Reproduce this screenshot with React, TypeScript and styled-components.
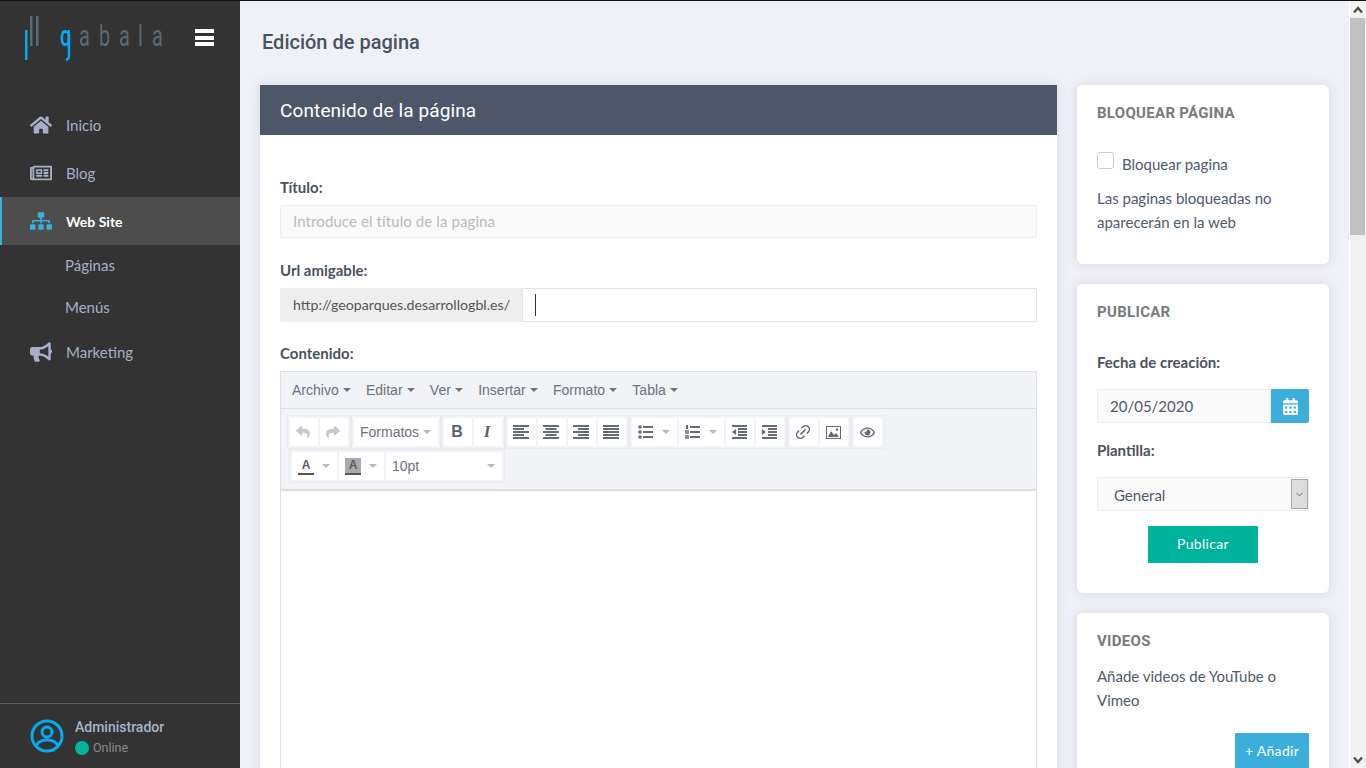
import React from "react";
import styled, { createGlobalStyle } from "styled-components";
import { FaHome, FaRegNewspaper, FaSitemap, FaBullhorn, FaCalendarAlt, FaReply, FaShare, FaRegEye } from "react-icons/fa";
import { Link2, ChevronDown } from "lucide-react";

const Global = createGlobalStyle`
  body { margin: 0; background: #f0f1f7; border-top: 1px solid #111; font-family: Lato, "Noto Sans", sans-serif; font-size: 15px; color: #4f5a6b; }
  * { box-sizing: border-box; }
`;

const Shell = styled.div`display: flex; align-items: flex-start;`;

const Rail = styled.div`
  position: fixed; right: 0; top: 1px; bottom: 0; width: 17px; background: #f1f1f1; border-left: 1px solid #fff;
  display: flex; flex-direction: column;
`;
const RailArrow = styled.svg`display: block; flex: none; width: 16px; height: 17px;`;
const RailThumb = styled.div`width: 15px; height: 217px; background: #c1c1c1;`;
const RailGap = styled.div`flex: 1;`;

const Sidebar = styled.aside`
  position: sticky; top: 0; width: 240px; flex: none; height: 767px; background: #333;
  display: flex; flex-direction: column;
`;
const Brand = styled.div`height: 100px; position: relative;`;
const LogoSvg = styled.svg`position: absolute; left: 0; top: 0;`;
const Burger = styled.div`
  position: absolute; left: 195px; top: 28px; width: 19px; display: flex; flex-direction: column; gap: 2.5px;
  span { display: block; height: 4px; background: #fff; }
`;
const Nav = styled.nav`display: flex; flex-direction: column; flex: 1;`;
const NavItem = styled.a<{ $active?: boolean; $lift?: boolean }>`
  height: 48px; display: flex; align-items: center; padding: 0 0 ${p => (p.$lift ? "2px" : "0")} 30px; gap: 14px;
  font-size: ${p => (p.$active ? "14px" : "15px")}; color: ${p => (p.$active ? "#fff" : "#a5b0c8")};
  font-weight: ${p => (p.$active ? 700 : 400)};
  background: ${p => (p.$active ? "#4d4d4d" : "transparent")};
  box-shadow: ${p => (p.$active ? "inset 2px 0 0 #3baedc" : "none")};
  svg { width: 22px; height: 20px; color: ${p => (p.$active ? "#3baedc" : "#a5b0c8")}; flex: none; }
`;
const SubItem = styled.a`height: 42px; display: flex; align-items: center; padding: 0 0 2px 65px; color: #a5b0c8; font-size: 15px;`;
const UserBar = styled.div`
  height: 65px; border-top: 1px solid #5a5a5a; display: flex; align-items: center; padding: 0 0 0 30px; gap: 11px;
`;
const UserText = styled.div`display: flex; flex-direction: column; gap: 4px; padding-top: 2px;`;
const UserName = styled.div`font: 500 14px/18px Roboto, sans-serif; color: #a9b4cc;`;
const UserState = styled.div`display: flex; align-items: center; gap: 4px; font: 400 12.5px/16px Roboto, sans-serif; color: #8a8a8a;`;
const Dot = styled.i`width: 14px; height: 14px; border-radius: 50%; background: #00b49c; display: block;`;

const Main = styled.main`flex: 1; min-width: 0; padding: 0 20px 20px;`;
const PageTitle = styled.h1`margin: 0; padding: 0 0 3px 2px; height: 84px; display: flex; align-items: center; font: 500 20px Roboto, sans-serif; color: #4a5260;`;
const Columns = styled.div`display: grid; grid-template-columns: 797px 252px; gap: 20px; align-items: start;`;
const Panel = styled.section`background: #fff; box-shadow: 0 0 12px rgba(60, 65, 90, .13);`;
const PanelHead = styled.header`height: 50px; background: #4d5769; color: #fff; display: flex; align-items: center; padding-left: 20px; font: 400 19px Roboto, sans-serif; letter-spacing: .12px;`;
const PanelBody = styled.div`padding: 44px 20px 20px;`;
const Label = styled.label<{ $top?: number }>`display: block; height: 18px; margin-top: ${p => p.$top ?? 0}px; font-weight: 700; font-size: 15px; line-height: 16px; color: #4a5260;`;
const TitleInput = styled.div`
  height: 33px; margin: 8px 0 24px; background: #fafafa; border: 1px solid #eee; border-radius: 2px;
  display: flex; align-items: center; padding: 0 0 2px 12px; color: #bbb; font-size: 15px; letter-spacing: .1px;
`;
const UrlGroup = styled.div`display: flex; height: 34px; margin: 8px 0 23px;`;
const UrlAddon = styled.div`width: 242px; background: #eee; display: flex; align-items: center; padding: 0 0 2px 13px; font-size: 14.2px; color: #555; border-radius: 2px 0 0 2px;`;
const UrlField = styled.div`flex: 1; background: #fff; border: 1px solid #e4e4e4; border-radius: 0 2px 2px 0; display: flex; align-items: center; padding-left: 12px;`;
const Caret = styled.i`display: block; width: 1px; height: 22px; background: #333;`;

const Editor = styled.div`margin-top: 8px; border: 1px solid #dcdfe6;`;
const MenuBar = styled.div`
  height: 37px; background: #f2f3f7; border-bottom: 1px solid #dcdfe6; display: flex; align-items: center; gap: 15.3px; padding-left: 11px;
  font: 14px "Liberation Sans", Arial, sans-serif; color: #6b7280;
`;
const MenuItem = styled.span`display: flex; align-items: center; gap: 4px;`;
const Tri = styled.i<{ $light?: boolean }>`
  display: block; width: 0; height: 0; border: 4px solid transparent; border-bottom: 0;
  border-top-color: ${p => (p.$light ? "#b4b8c0" : "#6b7280")};
`;
const Toolbar = styled.div`background: #f2f3f7; border-bottom: 2px solid #ddd; padding: 6px 0 6px 6px; height: 82px;`;
const ToolRow = styled.div<{ $inset?: boolean }>`display: flex; height: 34px; padding-left: ${p => (p.$inset ? "2px" : "0")};`;
const ToolGroup = styled.div`display: flex; gap: 2px; padding: 2px; border: 1px solid #e9ebf1;`;
const Tool = styled.div<{ $w?: number; $between?: boolean }>`
  width: ${p => p.$w ?? 28}px; height: 28px; background: #fff; display: flex; align-items: center;
  justify-content: ${p => (p.$between ? "space-between" : "center")};
  padding: ${p => (p.$between ? "0 7px 0 6px" : "0 2px 0 0")}; color: #626b78;
  font: 14px "Liberation Sans", Arial, sans-serif;
`;
const Muted = styled.span`color: #6b7280; display: flex;`;
const Disabled = styled.span`color: #c4c8cf; display: flex;`;
const Bold = styled.b`font: 700 16px "Liberation Sans", Arial, sans-serif; color: #596270;`;
const Ital = styled.i`font: italic 700 17px "Liberation Serif", serif; color: #596270;`;
const FontA = styled.span<{ $bg?: boolean }>`
  width: 16px; height: 17px; text-align: center; font: 700 12px/14px "Liberation Sans", Arial, sans-serif; color: #555d6a;
  border-bottom: 2px solid #555; background: ${p => (p.$bg ? "#aaa" : "transparent")};
`;
const EditArea = styled.div`height: 2040px; background: #fff;`;

const Side = styled.div`display: flex; flex-direction: column; gap: 20px;`;
const Card = styled.section<{ $h?: number }>`
  background: #fff; border-radius: 6px; box-shadow: 0 0 12px rgba(60, 65, 90, .13); padding: 20px;
  ${p => (p.$h ? `height: ${p.$h}px;` : "")}
`;
const CardTitle = styled.h3`margin: 0; font: 700 15px/17px Roboto, sans-serif; letter-spacing: .3px; color: #7a7a7a; text-transform: uppercase;`;
const CheckRow = styled.div`display: flex; align-items: flex-end; gap: 8px; margin-top: 30px; line-height: 20px;`;
const Check = styled.i`display: block; width: 17px; height: 17px; border: 1px solid #ccc; border-radius: 3px; margin-bottom: 5px;`;
const Para = styled.p<{ $top: number }>`margin: ${p => p.$top}px 0 0; line-height: 24px;`;
const DateGroup = styled.div`display: flex; height: 34px; margin: 17px 0 19px;`;
const DateField = styled.div`flex: 1; background: #fafafa; border: 1px solid #eee; display: flex; align-items: center; padding-left: 12px; font-size: 15px;`;
const DateBtn = styled.div`width: 38px; background: #3baedc; color: #fff; display: flex; align-items: center; justify-content: center; border-radius: 0 2px 2px 0; svg { width: 15px; height: 17px; }`;
const SelectBox = styled.div`position: relative; height: 34px; margin-top: 17px; background: #fafafa; border: 1px solid #eee; display: flex; align-items: center; padding: 2px 0 0 16px; font-size: 15px;`;
const SelectArrow = styled.span`
  position: absolute; right: 0; top: 1px; width: 17px; height: 30px; background: #ddd; border: 1px solid #aaa;
  display: flex; align-items: center; justify-content: center; color: #444;
`;
const Center = styled.div`display: flex; justify-content: center; margin-top: 15px;`;
const RightAlign = styled.div`display: flex; justify-content: flex-end; margin-top: 21px;`;
const Action = styled.button<{ $bg: string; $w: number; $h: number }>`
  width: ${p => p.$w}px; height: ${p => p.$h}px; background: ${p => p.$bg}; border: 0; border-radius: 1px; color: #fff;
  font: 400 14px Lato, sans-serif; letter-spacing: .3px; padding: 0 0 2px;
`;

const Lines = ({ a }: { a: "l" | "c" | "r" | "j" }) => {
  const rows = [16, 11, 16, 11, 16];
  const x = (w: number) => (a === "c" ? (16 - w) / 2 : a === "r" ? 16 - w : 0);
  return (
    <svg width="16" height="15" viewBox="0 0 16 15" fill="#636b78">
      {(a === "j" ? rows.map(() => 16) : rows).map((w, i) => (
        <rect key={i} x={x(w)} y={i * 3} width={w} height="2" />
      ))}
    </svg>
  );
};
const Bullets = () => (
  <svg width="15" height="14" viewBox="0 0 15 14" fill="#636b78">
    <circle cx="2" cy="2" r="1.8" /><circle cx="2" cy="7" r="1.8" /><circle cx="2" cy="12" r="1.8" />
    <rect x="5" y="1" width="10" height="2" /><rect x="5" y="6" width="10" height="2" /><rect x="5" y="11" width="10" height="2" />
  </svg>
);
const Numbers = () => (
  <svg width="15" height="14" viewBox="0 0 15 14" fill="#636b78">
    <rect x="1" y="0" width="2" height="4" /><rect x="0" y="5" width="4" height="4" fill="#8a919c" /><rect x="0" y="10" width="4" height="4" fill="#8a919c" />
    <rect x="5" y="1" width="10" height="2" /><rect x="5" y="6" width="10" height="2" /><rect x="5" y="11" width="10" height="2" />
  </svg>
);
const Indent = ({ out }: { out?: boolean }) => (
  <svg width="15" height="14" viewBox="0 0 15 14" fill="#636b78">
    <rect x="0" y="0" width="15" height="2" /><rect x="6" y="3" width="9" height="2" /><rect x="6" y="6" width="9" height="2" /><rect x="6" y="9" width="9" height="2" /><rect x="0" y="12" width="15" height="2" />
    <path d={out ? "M4 4v6L0 7z" : "M0 4v6l4-3z"} />
  </svg>
);
const Picture = () => (
  <svg width="15" height="13" viewBox="0 0 15 13">
    <rect x=".5" y=".5" width="14" height="12" fill="#fff" stroke="#636b78" />
    <path d="M2 11 L5 5 L8 9 L10 7 L13 11z" fill="#636b78" /><circle cx="11" cy="3.5" r="1.2" fill="#636b78" />
  </svg>
);
const Avatar = () => (
  <svg width="34" height="34" viewBox="0 0 34 34" fill="none" stroke="#00aeef" strokeWidth="3">
    <circle cx="17" cy="17" r="15" /><circle cx="17" cy="13" r="5" /><path d="M6 27c2-5 6-6 11-6s9 1 11 6" />
  </svg>
);

const letters: [string, number][] = [["a", 79], ["b", 99], ["a", 119], ["l", 138], ["a", 152]];
const Logo = () => (
  <LogoSvg width="170" height="62" viewBox="0 0 170 62">
    <defs><clipPath id="g-top"><rect x="55" y="20" width="20" height="26" /></clipPath></defs>
    <rect x="25" y="29" width="2.5" height="30" fill="#00aeef" />
    <rect x="30" y="15" width="2.5" height="30" fill="#5b6b75" />
    <rect x="36" y="15" width="2.5" height="30" fill="#5b6b75" />
    <g clipPath="url(#g-top)">
      <text transform="translate(60 45) scale(.66 1)" fontFamily="Roboto" fontWeight="500" fontSize="30" fill="#00aeef">g</text>
    </g>
    <path d="M69 33 V55 Q69 58 66 59" fill="none" stroke="#00aeef" strokeWidth="2.4" />
    {letters.map(([c, x]) => (
      <text key={x} transform={`translate(${x} 45) scale(.66 1)`} fontFamily="Roboto" fontWeight="400" fontSize="30" fill="#5b6b75">{c}</text>
    ))}
  </LogoSvg>
);

export default function App() {
  return (
    <Shell>
      <Global />
      <Sidebar>
        <Brand>
          <Logo />
          <Burger><span /><span /><span /></Burger>
        </Brand>
        <Nav>
          <NavItem><FaHome />Inicio</NavItem>
          <NavItem><FaRegNewspaper />Blog</NavItem>
          <NavItem $active><FaSitemap />Web Site</NavItem>
          <SubItem>Páginas</SubItem>
          <SubItem>Menús</SubItem>
          <NavItem $lift><FaBullhorn />Marketing</NavItem>
        </Nav>
        <UserBar>
          <Avatar />
          <UserText>
            <UserName>Administrador</UserName>
            <UserState><Dot />Online</UserState>
          </UserText>
        </UserBar>
      </Sidebar>
      <Main>
        <PageTitle>Edición de pagina</PageTitle>
        <Columns>
          <Panel>
            <PanelHead>Contenido de la página</PanelHead>
            <PanelBody>
              <Label>Título:</Label>
              <TitleInput>Introduce el título de la pagina</TitleInput>
              <Label>Url amigable:</Label>
              <UrlGroup>
                <UrlAddon>http://geoparques.desarrollogbl.es/</UrlAddon>
                <UrlField><Caret /></UrlField>
              </UrlGroup>
              <Label>Contenido:</Label>
              <Editor>
                <MenuBar>
                  {["Archivo", "Editar", "Ver", "Insertar", "Formato", "Tabla"].map(m => (
                    <MenuItem key={m}>{m}<Tri /></MenuItem>
                  ))}
                </MenuBar>
                <Toolbar>
                  <ToolRow>
                    <ToolGroup>
                      <Tool><Disabled><FaReply size={14} /></Disabled></Tool>
                      <Tool><Disabled><FaShare size={14} /></Disabled></Tool>
                    </ToolGroup>
                    <ToolGroup><Tool $w={84} $between><Muted>Formatos</Muted><Tri $light /></Tool></ToolGroup>
                    <ToolGroup>
                      <Tool><Bold>B</Bold></Tool>
                      <Tool><Ital>I</Ital></Tool>
                    </ToolGroup>
                    <ToolGroup>
                      <Tool><Lines a="l" /></Tool><Tool><Lines a="c" /></Tool><Tool><Lines a="r" /></Tool><Tool><Lines a="j" /></Tool>
                    </ToolGroup>
                    <ToolGroup>
                      <Tool $w={45} $between><Bullets /><Tri $light /></Tool>
                      <Tool $w={45} $between><Numbers /><Tri $light /></Tool>
                      <Tool><Indent out /></Tool>
                      <Tool><Indent /></Tool>
                    </ToolGroup>
                    <ToolGroup>
                      <Tool><Link2 size={18} strokeWidth={1.9} color="#5d6572" style={{ transform: "rotate(-45deg)" }} /></Tool>
                      <Tool><Picture /></Tool>
                    </ToolGroup>
                    <ToolGroup><Tool><FaRegEye size={15} /></Tool></ToolGroup>
                  </ToolRow>
                  <ToolRow $inset>
                    <ToolGroup>
                      <Tool $w={45} $between><FontA>A</FontA><Tri $light /></Tool>
                      <Tool $w={45} $between><FontA $bg>A</FontA><Tri $light /></Tool>
                      <Tool $w={116} $between><Muted>10pt</Muted><Tri $light /></Tool>
                    </ToolGroup>
                  </ToolRow>
                </Toolbar>
                <EditArea />
              </Editor>
            </PanelBody>
          </Panel>
          <Side>
            <Card $h={179}>
              <CardTitle>Bloquear página</CardTitle>
              <CheckRow><Check />Bloquear pagina</CheckRow>
              <Para $top={12}>Las paginas bloqueadas no aparecerán en la web</Para>
            </Card>
            <Card $h={309}>
              <CardTitle>Publicar</CardTitle>
              <Label $top={33}>Fecha de creación:</Label>
              <DateGroup>
                <DateField>20/05/2020</DateField>
                <DateBtn><FaCalendarAlt /></DateBtn>
              </DateGroup>
              <Label>Plantilla:</Label>
              <SelectBox>General<SelectArrow><ChevronDown size={11} strokeWidth={1.6} /></SelectArrow></SelectBox>
              <Center><Action $bg="#00b39c" $w={110} $h={37}>Publicar</Action></Center>
            </Card>
            <Card>
              <CardTitle>Videos</CardTitle>
              <Para $top={14}>Añade videos de YouTube o Vimeo</Para>
              <RightAlign><Action $bg="#3baedc" $w={74} $h={36}>+ Añadir</Action></RightAlign>
            </Card>
          </Side>
        </Columns>
      </Main>
      <Rail>
        <RailArrow viewBox="0 0 16 17"><path d="M4 11.5 L8 7 L12 11.5" fill="none" stroke="#505050" strokeWidth="2.4" /></RailArrow>
        <RailThumb />
        <RailGap />
        <RailArrow viewBox="0 0 16 17"><path d="M4 6.5 L8 11 L12 6.5" fill="none" stroke="#505050" strokeWidth="2.4" /></RailArrow>
      </Rail>
    </Shell>
  );
}
